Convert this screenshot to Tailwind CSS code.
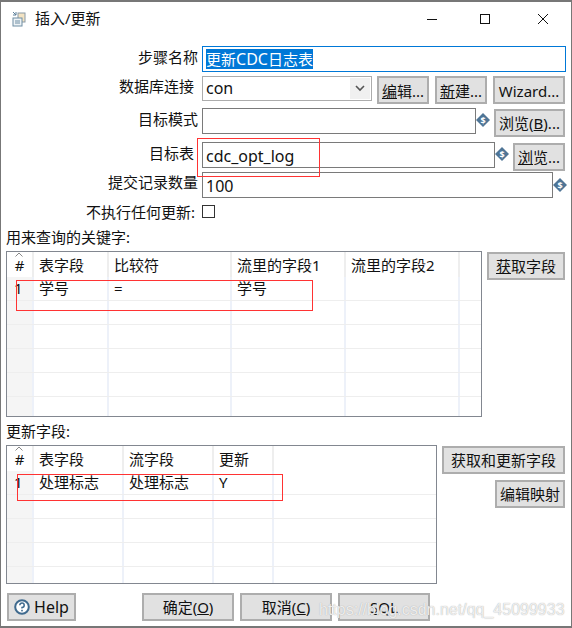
<!DOCTYPE html>
<html lang="en">
<head>
    <meta charset="UTF-8">
    <title>插入/更新</title>
    <script src="https://cdn.jsdelivr.net/npm/@tailwindcss/browser@4"></script>
</head>
<body class="bg-white">
<div class="relative w-[572px] h-[628px] overflow-hidden bg-white border-x border-y-2 border-[#777] text-[15px] leading-[20px] text-[#111] font-['Noto_Sans','Noto_Sans_CJK_SC',sans-serif]">

    <!-- title bar -->
    <div class="flex items-center h-[34px] pl-[11px] pb-[1px]">
        <svg width="14" height="16" viewBox="0 0 14 16">
            <path d="M1 1l3 3M4 1v3H1" fill="none" stroke="#5b7f99" stroke-width="1"/>
            <rect x="6" y="2" width="7" height="9" fill="#f3e3c3" stroke="#8a9aa6"/>
            <rect x="1" y="7" width="9" height="8" fill="#eef3f6" stroke="#6f8ea4"/>
            <path d="M3 10h5M3 12h5" stroke="#6f8ea4"/>
        </svg>
        <span class="ml-[9px] mt-[-1px]">插入/更新</span>
        <div class="ml-auto flex items-center">
            <svg width="12" height="12" viewBox="0 0 12 12" class="mr-[41px]"><path d="M1 6.5h10" stroke="#111"/></svg>
            <svg width="12" height="12" viewBox="0 0 12 12" class="mr-[46px]"><rect x="1.5" y="1.5" width="9" height="9" fill="none" stroke="#111"/></svg>
            <svg width="12" height="12" viewBox="0 0 12 12" class="mr-[22px]"><path d="M1 1l10 10M11 1L1 11" stroke="#111"/></svg>
        </div>
    </div>

    <!-- form rows -->
    <div class="flex h-[26px] mt-[10px]">
        <label class="w-[197px] text-right pt-[1px]">步骤名称</label>
        <div class="ml-[4px] w-[364px] h-[26px] border border-[#0078d7] px-[3px] py-[2px]"><span class="bg-[#0078d7] text-white">更新<span class="text-[16px]">CDC</span>日志表</span></div>
    </div>
    <div class="flex h-[29px] mt-[4px]">
        <label class="w-[193px] text-right">数据库连接</label>
        <div class="ml-[8px] w-[170px] h-[25px] border border-[#acacac] pl-[3px] flex items-center justify-between">
            <span class="text-[16px] mt-[-2px]">con</span>
            <span class="flex items-center justify-center w-[20px] h-[21px] mr-[1px] bg-[#f0f0f0]">
                <svg width="10" height="7" viewBox="0 0 10 7"><path d="M1 1l4 4 4-4" fill="none" stroke="#555" stroke-width="1.6"/></svg>
            </span>
        </div>
        <button class="ml-[5px] w-[52px] h-[28px] pt-[1px] bg-[#e1e1e1] border-2 border-[#adadad]"><u>编</u>辑...</button>
        <button class="ml-[6px] w-[52px] h-[28px] pt-[1px] bg-[#e1e1e1] border-2 border-[#adadad]"><u>新</u>建...</button>
        <button class="ml-[6px] w-[72px] h-[28px] pt-[1px] bg-[#e1e1e1] border-2 border-[#adadad]">Wizard...</button>
    </div>
    <div class="flex h-[29px] mt-[3px]">
        <label class="w-[197px] text-right pt-[1px]">目标模式</label>
        <div class="ml-[4px] w-[274px] h-[26px] border border-[#7a7a7a]"></div>
        <svg width="14" height="14" viewBox="0 0 14 14" class="mt-[5px]"><path d="M7 0l7 7-7 7-7-7z" fill="#4f7596"/><text x="7" y="10.5" font-size="9" font-weight="700" text-anchor="middle" fill="#fff">$</text></svg>
        <button class="ml-[4px] w-[71px] h-[28px] mt-[1px] bg-[#e1e1e1] border-2 border-[#adadad]">浏览(<u>B</u>)...</button>
    </div>
    <div class="flex h-[29px] mt-[5px]">
        <label class="w-[193px] text-right pt-[1px]">目标表</label>
        <div class="ml-[8px] w-[293px] h-[26px] border border-[#7a7a7a] px-[3px] pt-[3px] text-[16px]">cdc_opt_log</div>
        <svg width="14" height="14" viewBox="0 0 14 14" class="mt-[5px]"><path d="M7 0l7 7-7 7-7-7z" fill="#4f7596"/><text x="7" y="10.5" font-size="9" font-weight="700" text-anchor="middle" fill="#fff">$</text></svg>
        <button class="ml-[4px] w-[52px] h-[28px] mt-[1px] bg-[#e1e1e1] border-2 border-[#adadad]"><u>浏</u>览...</button>
    </div>
    <div class="flex h-[26px] mt-[1px]">
        <label class="w-[197px] text-right">提交记录数量</label>
        <div class="ml-[4px] w-[351px] h-[26px] border border-[#7a7a7a] px-[3px] pt-[3px] text-[16px]">100</div>
        <svg width="14" height="14" viewBox="0 0 14 14" class="mt-[6px]"><path d="M7 0l7 7-7 7-7-7z" fill="#4f7596"/><text x="7" y="10.5" font-size="9" font-weight="700" text-anchor="middle" fill="#fff">$</text></svg>
    </div>
    <div class="flex h-[20px] mt-[4px]">
        <label class="w-[194px] text-right">不执行任何更新:</label>
        <span class="ml-[7px] mt-[3px] w-[13px] h-[13px] border border-[#333]"></span>
    </div>

    <!-- key table -->
    <div class="pl-[5px] mt-[5px] h-[20px]">用来查询的关键字:</div>
    <div class="flex mt-[4px]">
        <div class="ml-[5px] w-[476px] h-[166px] border border-[#828790] overflow-hidden">
            <div class="grid grid-cols-[27px_75px_123px_114px_114px_1fr] h-[25px]">
                <div class="relative text-center pt-[3px] border-r-2 border-[#eee]">
                    <svg width="8" height="5" viewBox="0 0 8 5" class="absolute left-[8px] top-[0px]"><path d="M0.5 4.5L4 1l3.5 3.5" fill="none" stroke="#888"/></svg>
                    #
                </div>
                <div class="pl-[5px] pt-[3px] border-r-2 border-[#eee]">表字段</div>
                <div class="pl-[5px] pt-[3px] border-r-2 border-[#eee]">比较符</div>
                <div class="pl-[5px] pt-[3px] border-r-2 border-[#eee]">流里的字段1</div>
                <div class="pl-[5px] pt-[3px] border-r-2 border-[#eee]">流里的字段2</div>
                <div></div>
            </div>
            <div class="grid grid-cols-[27px_75px_123px_114px_114px_1fr] h-[24px] border-b border-[#eee]">
                <div class="pl-[7px] pt-[1px] bg-[#f5f5f5] border-r-2 border-[#edf1f9]">1</div>
                <div class="pl-[5px] pt-[1px] border-r-2 border-[#edf1f9]">学号</div>
                <div class="pl-[5px] pt-[1px] border-r-2 border-[#edf1f9]">=</div>
                <div class="pl-[5px] pt-[1px] border-r-2 border-[#edf1f9]">学号</div>
                <div class="border-r-2 border-[#edf1f9]"></div>
                <div></div>
            </div>
            <div class="grid grid-cols-[27px_75px_123px_114px_114px_1fr] h-[24px] border-b border-[#eee]">
                <div class="bg-[#f5f5f5] border-r-2 border-[#edf1f9]"></div><div class="border-r-2 border-[#edf1f9]"></div><div class="border-r-2 border-[#edf1f9]"></div><div class="border-r-2 border-[#edf1f9]"></div><div class="border-r-2 border-[#edf1f9]"></div><div></div>
            </div>
            <div class="grid grid-cols-[27px_75px_123px_114px_114px_1fr] h-[24px] border-b border-[#eee]">
                <div class="bg-[#f5f5f5] border-r-2 border-[#edf1f9]"></div><div class="border-r-2 border-[#edf1f9]"></div><div class="border-r-2 border-[#edf1f9]"></div><div class="border-r-2 border-[#edf1f9]"></div><div class="border-r-2 border-[#edf1f9]"></div><div></div>
            </div>
            <div class="grid grid-cols-[27px_75px_123px_114px_114px_1fr] h-[24px] border-b border-[#eee]">
                <div class="bg-[#f5f5f5] border-r-2 border-[#edf1f9]"></div><div class="border-r-2 border-[#edf1f9]"></div><div class="border-r-2 border-[#edf1f9]"></div><div class="border-r-2 border-[#edf1f9]"></div><div class="border-r-2 border-[#edf1f9]"></div><div></div>
            </div>
            <div class="grid grid-cols-[27px_75px_123px_114px_114px_1fr] h-[24px] border-b border-[#eee]">
                <div class="bg-[#f5f5f5] border-r-2 border-[#edf1f9]"></div><div class="border-r-2 border-[#edf1f9]"></div><div class="border-r-2 border-[#edf1f9]"></div><div class="border-r-2 border-[#edf1f9]"></div><div class="border-r-2 border-[#edf1f9]"></div><div></div>
            </div>
            <div class="grid grid-cols-[27px_75px_123px_114px_114px_1fr] h-[19px]">
                <div class="bg-[#f5f5f5] border-r-2 border-[#edf1f9]"></div><div class="border-r-2 border-[#edf1f9]"></div><div class="border-r-2 border-[#edf1f9]"></div><div class="border-r-2 border-[#edf1f9]"></div><div class="border-r-2 border-[#edf1f9]"></div><div></div>
            </div>
        </div>
        <button class="ml-[5px] mt-[1px] w-[78px] h-[28px] bg-[#e1e1e1] border-2 border-[#adadad]"><u>获</u>取字段</button>
    </div>

    <!-- update table -->
    <div class="pl-[5px] mt-[4px] h-[20px]">更新字段:</div>
    <div class="flex mt-[4px]">
        <div class="ml-[5px] w-[431px] h-[139px] border border-[#828790] overflow-hidden">
            <div class="grid grid-cols-[27px_90px_90px_60px_1fr] h-[25px]">
                <div class="relative text-center pt-[3px] border-r-2 border-[#eee]">
                    <svg width="8" height="5" viewBox="0 0 8 5" class="absolute left-[8px] top-[0px]"><path d="M0.5 4.5L4 1l3.5 3.5" fill="none" stroke="#888"/></svg>
                    #
                </div>
                <div class="pl-[5px] pt-[3px] border-r-2 border-[#eee]">表字段</div>
                <div class="pl-[5px] pt-[3px] border-r-2 border-[#eee]">流字段</div>
                <div class="pl-[5px] pt-[3px] border-r-2 border-[#eee]">更新</div>
                <div></div>
            </div>
            <div class="grid grid-cols-[27px_90px_90px_60px_1fr] h-[24px] border-b border-[#eee]">
                <div class="pl-[7px] pt-[1px] bg-[#f5f5f5] border-r-2 border-[#edf1f9]">1</div>
                <div class="pl-[5px] pt-[1px] border-r-2 border-[#edf1f9]">处理标志</div>
                <div class="pl-[5px] pt-[1px] border-r-2 border-[#edf1f9]">处理标志</div>
                <div class="pl-[5px] pt-[1px] border-r-2 border-[#edf1f9]">Y</div>
                <div></div>
            </div>
            <div class="grid grid-cols-[27px_90px_90px_60px_1fr] h-[24px] border-b border-[#eee]">
                <div class="bg-[#f5f5f5] border-r-2 border-[#edf1f9]"></div><div class="border-r-2 border-[#edf1f9]"></div><div class="border-r-2 border-[#edf1f9]"></div><div class="border-r-2 border-[#edf1f9]"></div><div></div>
            </div>
            <div class="grid grid-cols-[27px_90px_90px_60px_1fr] h-[24px] border-b border-[#eee]">
                <div class="bg-[#f5f5f5] border-r-2 border-[#edf1f9]"></div><div class="border-r-2 border-[#edf1f9]"></div><div class="border-r-2 border-[#edf1f9]"></div><div class="border-r-2 border-[#edf1f9]"></div><div></div>
            </div>
            <div class="grid grid-cols-[27px_90px_90px_60px_1fr] h-[24px] border-b border-[#eee]">
                <div class="bg-[#f5f5f5] border-r-2 border-[#edf1f9]"></div><div class="border-r-2 border-[#edf1f9]"></div><div class="border-r-2 border-[#edf1f9]"></div><div class="border-r-2 border-[#edf1f9]"></div><div></div>
            </div>
            <div class="grid grid-cols-[27px_90px_90px_60px_1fr] h-[16px]">
                <div class="bg-[#f5f5f5] border-r-2 border-[#edf1f9]"></div><div class="border-r-2 border-[#edf1f9]"></div><div class="border-r-2 border-[#edf1f9]"></div><div class="border-r-2 border-[#edf1f9]"></div><div></div>
            </div>
        </div>
        <div class="ml-[5px] flex flex-col items-end w-[123px] mt-[1px] gap-[6px]">
            <button class="w-[123px] h-[28px] bg-[#e1e1e1] border-2 border-[#adadad]">获取和更新字段</button>
            <button class="w-[70px] h-[28px] bg-[#e1e1e1] border-2 border-[#adadad]">编辑映射</button>
        </div>
    </div>

    <!-- bottom buttons -->
    <div class="flex mt-[9px] pl-[6px]">
        <button class="flex items-center justify-center gap-[4px] w-[69px] h-[28px] text-[16px] bg-[#e1e1e1] border-2 border-[#adadad]">
            <svg width="16" height="16" viewBox="0 0 16 16"><circle cx="8" cy="8" r="6.8" fill="#fff" stroke="#3f6a8e" stroke-width="2"/><path d="M5.8 6.2A2.2 2.2 0 1 1 8 8.4v1.2" fill="none" stroke="#3f6a8e" stroke-width="1.5"/><rect x="7.2" y="10.8" width="1.6" height="1.6" fill="#3f6a8e"/></svg>
            Help
        </button>
        <button class="ml-[66px] w-[92px] h-[28px] bg-[#e1e1e1] border-2 border-[#adadad]">确定(<u>O</u>)</button>
        <button class="ml-[6px] w-[92px] h-[28px] bg-[#e1e1e1] border-2 border-[#adadad]">取消(<u>C</u>)</button>
        <button class="ml-[6px] w-[92px] h-[28px] bg-[#e1e1e1] border-2 border-[#adadad]"><u>S</u>QL</button>
    </div>

    <!-- red annotations and watermark lie over the dialog -->
    <div class="absolute left-[196px] top-[136px] w-[123px] h-[39px] border border-[#f33]"></div>
    <div class="absolute left-[15px] top-[278px] w-[297px] h-[31px] border border-[#f33]"></div>
    <div class="absolute left-[16px] top-[472px] w-[266px] h-[27px] border border-[#f33]"></div>
    <div class="absolute left-[318px] top-[598px] text-[16px] text-white/80 [text-shadow:0_0_1px_#999] font-['Liberation_Sans',sans-serif]">https://blog.csdn.net/qq_45099933</div>
</div>
</body>
</html>
